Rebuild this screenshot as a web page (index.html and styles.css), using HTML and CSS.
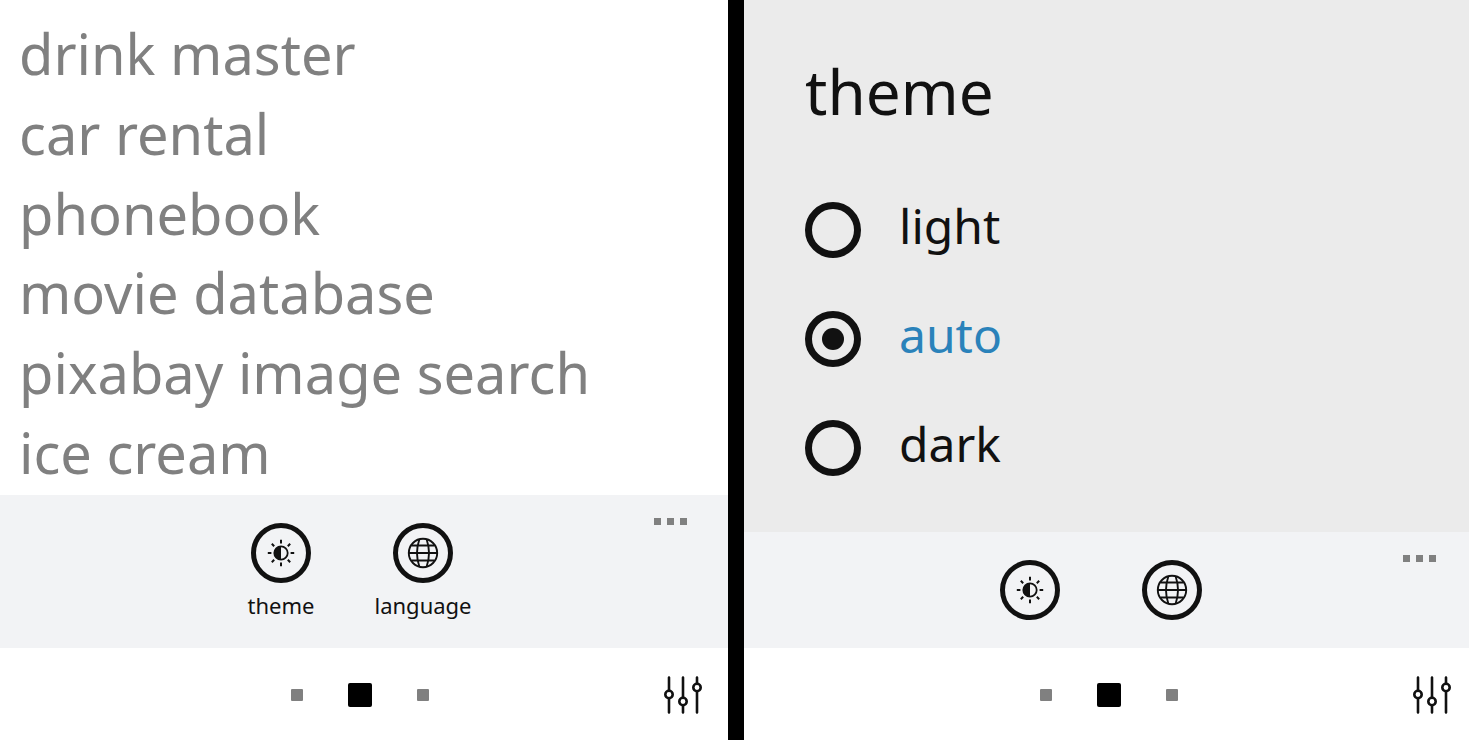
FILE: index.html
```
<!DOCTYPE html>
<html lang="en">
<head>
<meta charset="utf-8">
<title>Theme settings</title>
<link rel="stylesheet" href="styles.css">
</head>
<body>
<svg class="sprite" aria-hidden="true">
  <symbol id="icon-theme" viewBox="0 0 32 32">
    <circle cx="16" cy="16" r="6.700" fill="none" stroke="currentColor" stroke-width="1.800"/>
    <path d="M16 9.200a6.800 6.800 0 0 0 0 13.600z" fill="currentColor"/>
    <path d="M16 2.800v3.600M16 25.600v3.600M2.800 16h3.600M25.600 16h3.600M6.800 6.800l2.400 2.400M22.800 22.800l2.400 2.400M6.800 25.200l2.400-2.400M22.800 9.200l2.400-2.400" fill="none" stroke="currentColor" stroke-width="2"/>
  </symbol>
  <symbol id="icon-globe" viewBox="0 0 32 32">
    <g fill="none" stroke="currentColor" stroke-width="1.900">
      <circle cx="16" cy="16" r="14.200"/>
      <path d="M1.800 16h28.400M4.500 8.500h23M4.500 23.500h23M12.400 2.300c-3 8.500-3 18.900 0 27.400M19.600 2.300c3 8.500 3 18.900 0 27.400"/>
    </g>
  </symbol>
  <symbol id="icon-sliders" viewBox="0 0 40 40">
    <g fill="none" stroke="currentColor" stroke-width="2.600" stroke-linecap="round">
      <path d="M6 2.500v13M6 23.500v14M20 2.500v20M20 30.500v7M34 2.500v6M34 16.500v21"/>
      <circle cx="6" cy="19.500" r="3.700"/>
      <circle cx="20" cy="26.500" r="3.700"/>
      <circle cx="34" cy="12.500" r="3.700"/>
    </g>
  </symbol>
</svg>
<main class="screens">
  <section class="screen screen-home">
    <nav class="app-list">
      <a href="#">drink master</a>
      <a href="#">car rental</a>
      <a href="#">phonebook</a>
      <a href="#">movie database</a>
      <a href="#">pixabay image search</a>
      <a href="#">ice cream</a>
    </nav>
    <div class="app-bar">
      <div class="actions">
        <button class="action" type="button"><span class="ring"><svg><use href="#icon-theme"/></svg></span><span class="caption">theme</span></button>
        <button class="action" type="button"><span class="ring"><svg><use href="#icon-globe"/></svg></span><span class="caption">language</span></button>
      </div>
      <button class="more" type="button" aria-label="More"><i></i><i></i><i></i></button>
    </div>
    <footer class="pager">
      <div class="pages">
        <button class="page" type="button" aria-label="Page 1"></button>
        <button class="page current" type="button" aria-label="Page 2"></button>
        <button class="page" type="button" aria-label="Page 3"></button>
      </div>
      <button class="settings" type="button" aria-label="Settings"><svg><use href="#icon-sliders"/></svg></button>
    </footer>
  </section>
  <section class="screen screen-theme">
    <form class="picker">
      <h1 class="title">theme</h1>
      <div class="options">
        <label class="option"><input type="radio" name="theme"><span>light</span></label>
        <label class="option"><input type="radio" name="theme" checked><span>auto</span></label>
        <label class="option"><input type="radio" name="theme"><span>dark</span></label>
      </div>
    </form>
    <div class="app-bar">
      <div class="actions">
        <button class="action" type="button" aria-label="Theme"><span class="ring"><svg><use href="#icon-theme"/></svg></span></button>
        <button class="action" type="button" aria-label="Language"><span class="ring"><svg><use href="#icon-globe"/></svg></span></button>
      </div>
      <button class="more" type="button" aria-label="More"><i></i><i></i><i></i></button>
    </div>
    <footer class="pager">
      <div class="pages">
        <button class="page" type="button" aria-label="Page 1"></button>
        <button class="page current" type="button" aria-label="Page 2"></button>
        <button class="page" type="button" aria-label="Page 3"></button>
      </div>
      <button class="settings" type="button" aria-label="Settings"><svg><use href="#icon-sliders"/></svg></button>
    </footer>
  </section>
</main>
</body>
</html>
```
FILE: styles.css
```
* { box-sizing: border-box; }

body {
  margin: 0;
  font-family: "Noto Sans", "Open Sans", sans-serif;
  color: #111;
  background: #000;
}

button {
  padding: 0;
  border: 0;
  background: none;
  color: inherit;
  font: inherit;
}

.sprite { position: absolute; width: 0; height: 0; }

.screens {
  display: grid;
  grid-template-columns: 728fr 725fr;
  gap: 16px;
  min-height: 100vh;
}

.screen {
  display: flex;
  flex-direction: column;
  background: #fff;
}

.app-list {
  flex: 1;
  display: grid;
  grid-auto-rows: 1fr;
  align-items: center;
  padding: 14px 19px 3px;
}

.app-list a {
  color: #808080;
  font-size: 56px;
  line-height: 79px;
  text-decoration: none;
}

.app-bar {
  display: grid;
  grid-template-columns: 1fr;
  align-items: start;
  background: #f2f3f5;
}

.actions, .more { grid-area: 1 / 1; }

.actions {
  display: flex;
  justify-content: center;
  padding: 28px 16px 28px 0;
}

.action {
  display: flex;
  flex-direction: column;
  align-items: center;
  gap: 7px;
  width: 142px;
}

.ring {
  display: grid;
  place-items: center;
  width: 60px;
  height: 60px;
  border: 5px solid #111;
  border-radius: 50%;
}

.ring svg { width: 32px; height: 32px; }

.caption { font-size: 22px; line-height: 30px; }

.more {
  justify-self: end;
  display: flex;
  gap: 6px;
  padding: 23px 33px;
}

.more i { width: 7px; height: 7px; background: #808080; }

.pager {
  display: grid;
  align-items: center;
  height: 92px;
  padding-top: 1px;
}

.pages, .settings { grid-area: 1 / 1; }

.pages {
  display: flex;
  align-items: center;
  justify-content: center;
  gap: 45px;
}

.page { width: 12px; height: 12px; border-radius: 1px; background: #808080; }
.page.current { width: 24px; height: 24px; border-radius: 2px; background: #000; }

.settings { justify-self: end; margin-right: 17px; }
.settings svg { display: block; width: 40px; height: 40px; }

.screen-home .app-bar,
.screen-home .pager { padding-right: 8px; }

.screen-theme .app-bar,
.screen-theme .pager { padding-left: 5px; }

.picker {
  flex: 1;
  padding: 47px 61px 0;
  background: #ebebeb;
}

.title {
  margin: 0;
  font-size: 62px;
  font-weight: 400;
  line-height: 88px;
}

.options {
  display: grid;
  gap: 40px;
  padding-top: 60px;
}

.option {
  display: flex;
  align-items: center;
  gap: 38px;
  height: 69px;
  font-size: 48px;
  line-height: 68px;
}

.option span { padding-bottom: 8px; }
.option input:checked + span { color: #2a82ba; }

.option input {
  appearance: none;
  display: grid;
  place-items: center;
  width: 56px;
  height: 56px;
  margin: 0;
  border: 7px solid #111;
  border-radius: 50%;
}

.option input:checked::before {
  content: "";
  width: 22px;
  height: 22px;
  border-radius: 50%;
  background: #111;
}
```
